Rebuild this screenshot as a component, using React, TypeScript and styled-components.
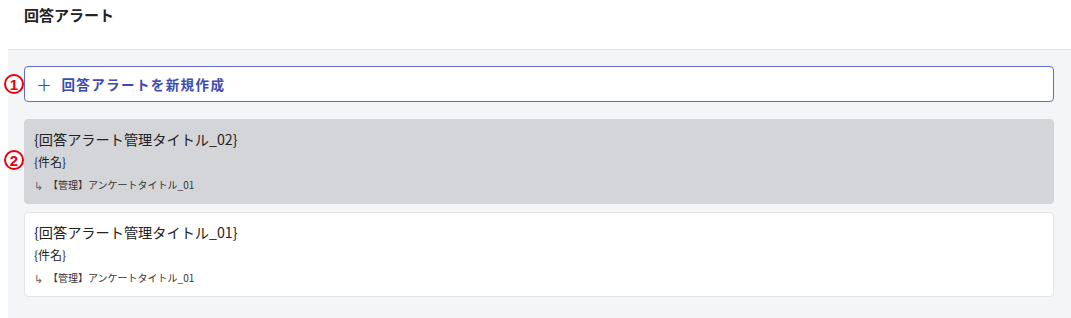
import React from "react";
import styled, { createGlobalStyle } from "styled-components";

const GlobalStyle = createGlobalStyle`
  html, body {
    margin: 0;
    padding: 0;
    background: #ffffff;
  }
  body {
    font-family: "Noto Sans CJK JP", "Noto Sans", "Liberation Sans", sans-serif;
    color: #222;
  }
`;

interface Alert {
  id: string;
  title: string;
  subject: string;
  survey: string;
  selected?: boolean;
}

const alerts: Alert[] = [
  {
    id: "02",
    title: "{回答アラート管理タイトル_02}",
    subject: "{件名}",
    survey: "【管理】アンケートタイトル_01",
    selected: true,
  },
  {
    id: "01",
    title: "{回答アラート管理タイトル_01}",
    subject: "{件名}",
    survey: "【管理】アンケートタイトル_01",
  },
];

const Page = styled.div`
  width: 1071px;
  height: 318px;
  display: flex;
  flex-direction: column;
  overflow: hidden;
`;

const Header = styled.header`
  height: 49px;
  padding: 5px 24px 0;
  box-sizing: border-box;
`;

const PageTitle = styled.h1`
  margin: 0;
  font-size: 15px;
  line-height: 20px;
  font-weight: 700;
  color: #222;
`;

const Panel = styled.section`
  flex: 1;
  margin-left: 8px;
  background: #f4f5f7;
  border-top: 1px solid #e2e3e6;
  padding: 16px 17px 0 16px;
  display: flex;
  flex-direction: column;
`;

const Row = styled.div<{ $gap: number }>`
  position: relative;
  margin-bottom: ${(p) => p.$gap}px;
`;

/* red numbered annotation laid over the left edge */
const Marker = styled.span<{ $top: number }>`
  position: absolute;
  left: -20px;
  top: ${(p) => p.$top}px;
  width: 20px;
  height: 20px;
  box-sizing: border-box;
  border: 2.5px solid #e8000b;
  border-radius: 50%;
  display: flex;
  align-items: center;
  justify-content: center;
  font-family: "Liberation Sans", sans-serif;
  font-size: 15px;
  line-height: 1;
  font-weight: 700;
  color: #e8000b;
  background: #ffffff;
  z-index: 1;
`;

const CreateButton = styled.button`
  width: 100%;
  height: 36px;
  box-sizing: border-box;
  display: flex;
  align-items: center;
  gap: 8px;
  padding: 0 11px;
  background: #ffffff;
  border: 1px solid #5e6ccb;
  border-radius: 4px;
  font-family: inherit;
  font-size: 13.5px;
  font-weight: 700;
  letter-spacing: 1.4px;
  color: #3d4bb1;
  cursor: pointer;
`;

const Plus = styled.span`
  font-size: 16px;
  font-weight: 400;
  line-height: 1;
`;

const Card = styled.div<{ $selected?: boolean }>`
  box-sizing: border-box;
  height: 85px;
  padding: 9px 9px 0;
  border-radius: 4px;
  background: ${(p) => (p.$selected ? "#d4d5d8" : "#ffffff")};
  border: 1px solid ${(p) => (p.$selected ? "#d4d5d8" : "#e3e4e6")};
  display: flex;
  flex-direction: column;
`;

const CardTitle = styled.div`
  font-size: 14.2px;
  line-height: 20px;
  color: #222;
`;

const CardSubject = styled.div`
  margin-top: 5px;
  font-size: 12px;
  line-height: 16px;
  color: #222;
`;

const CardSurvey = styled.div`
  margin-top: 8px;
  font-size: 10px;
  line-height: 14px;
  color: #333;
  display: flex;
  align-items: center;
  gap: 5px;
`;

const Arrow = styled.span`
  color: #666;
  font-size: 11px;
`;

export default function App() {
  return (
    <>
      <GlobalStyle />
      <Page>
        <Header>
          <PageTitle>回答アラート</PageTitle>
        </Header>
        <Panel>
          <Row $gap={17}>
            <Marker $top={8}>1</Marker>
            <CreateButton>
              <Plus>＋</Plus>
              回答アラートを新規作成
            </CreateButton>
          </Row>
          {alerts.map((a, i) => (
            <Row key={a.id} $gap={8}>
              {i === 0 && <Marker $top={31}>2</Marker>}
              <Card $selected={a.selected}>
                <CardTitle>{a.title}</CardTitle>
                <CardSubject>{a.subject}</CardSubject>
                <CardSurvey>
                  <Arrow>↳</Arrow>
                  {a.survey}
                </CardSurvey>
              </Card>
            </Row>
          ))}
        </Panel>
      </Page>
    </>
  );
}
